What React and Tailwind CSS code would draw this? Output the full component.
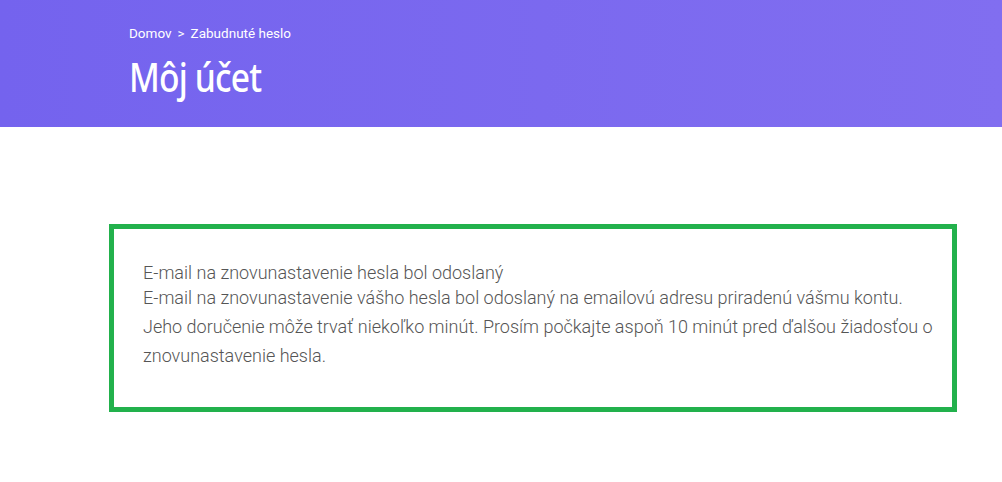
import React from 'react';

export default function App() {
  return (
    <div className="min-h-screen bg-white font-['Roboto',sans-serif]">
      <div className="h-[127px] bg-gradient-to-r from-[#7463ee] to-[#816ef0]">
        <div className="pl-[129px] pt-[24px]">
          <div className="flex items-center gap-[6px] text-[13.5px] leading-[18px] text-white">
            <span>Domov</span>
            <span>&gt;</span>
            <span>Zabudnuté heslo</span>
          </div>
          <h1 className="mt-[12px] origin-left scale-x-[0.84] font-['Noto_Sans',sans-serif] text-[40px] leading-[46px] font-medium tracking-[-1px] text-white">
            Môj účet
          </h1>
        </div>
      </div>
      <div className="pt-[97px] pl-[109px]">
        <div className="w-[848px] border-[5px] border-[#22b14c] pt-[33px] pb-[37px] pl-[29px] pr-[17px] font-light text-[18px] text-[#555]">
          <div className="leading-[22px]">E-mail na znovunastavenie hesla bol odoslaný</div>
          <p className="leading-[28.8px]">
            E-mail na znovunastavenie vášho hesla bol odoslaný na emailovú adresu priradenú vášmu kontu. Jeho doručenie môže trvať niekoľko minút. Prosím počkajte aspoň 10 minút pred ďalšou žiadosťou o znovunastavenie hesla.
          </p>
        </div>
      </div>
    </div>
  );
}
